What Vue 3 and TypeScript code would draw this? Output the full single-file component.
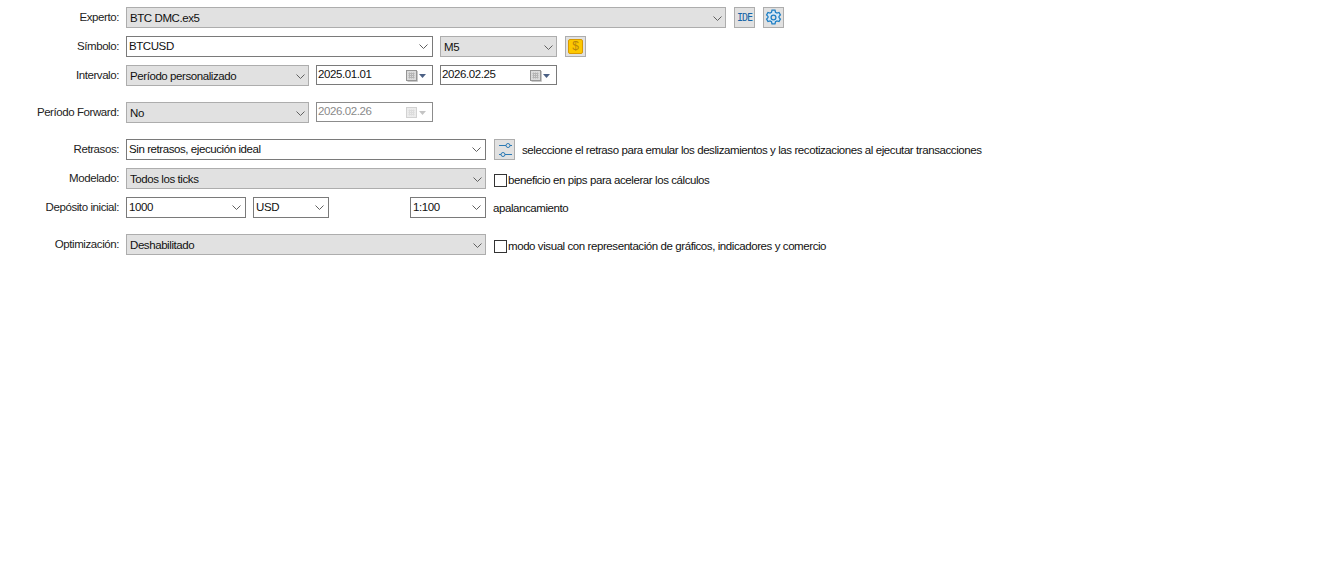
<script setup lang="ts">
const chevron = "M0.5 0.5 L4.5 4.5 L8.5 0.5";
</script>

<template>
  <div class="form">
    <div class="row">
      <label class="lbl">Experto:</label>
      <div class="sel gray w600"><span>BTC DMC.ex5</span><svg class="chev" viewBox="0 0 9 5"><path :d="chevron" /></svg></div>
      <button class="btn ml8 ide">IDE</button>
      <button class="btn ml8">
        <svg width="17" height="17" viewBox="0 0 17 17" fill="#d5e8f6" stroke="#1f7fc4" stroke-width="1.300">
          <path d="M7 1.200h3l.5 2 1.500.8 2-.6 1.400 2.600-1.400 1.400v1.200l1.400 1.400-1.400 2.600-2-.6-1.500.8-.5 2H7l-.5-2-1.500-.8-2 .6L1.600 10l1.400-1.400V7.400L1.600 6 3 3.400l2 .6 1.500-.8z" />
          <circle cx="8.500" cy="8.500" r="2.400" fill="#e1e1e1" />
        </svg>
      </button>
    </div>
    <div class="row">
      <label class="lbl">Símbolo:</label>
      <div class="sel white w307"><span>BTCUSD</span><svg class="chev" viewBox="0 0 9 5"><path :d="chevron" /></svg></div>
      <div class="sel gray w117 ml7"><span>M5</span><svg class="chev" viewBox="0 0 9 5"><path :d="chevron" /></svg></div>
      <button class="btn ml8"><span class="coin">$</span></button>
    </div>
    <div class="row">
      <label class="lbl">Intervalo:</label>
      <div class="sel gray w183"><span>Período personalizado</span><svg class="chev" viewBox="0 0 9 5"><path :d="chevron" /></svg></div>
      <div class="date ml7"><span>2025.01.01</span>
        <svg class="cal" width="20" height="13" viewBox="0 0 20 13">
          <rect x="0.5" y="0.5" width="10" height="10" fill="#dcdcdc" stroke="#959595" />
          <path d="M2.500 3.500h6M2.500 5.500h6M2.500 7.500h6M3.500 2.500v6M5.500 2.500v6M7.500 2.500v6" stroke="#b4b4b4" fill="none" />
          <path d="M11.500 1v10.500H1.500" stroke="#c8c8c8" fill="none" />
          <path d="M13 4h7l-3.500 4z" fill="#4c6185" />
        </svg>
      </div>
      <div class="date ml7"><span>2026.02.25</span>
        <svg class="cal" width="20" height="13" viewBox="0 0 20 13">
          <rect x="0.5" y="0.5" width="10" height="10" fill="#dcdcdc" stroke="#959595" />
          <path d="M2.500 3.500h6M2.500 5.500h6M2.500 7.500h6M3.500 2.500v6M5.500 2.500v6M7.500 2.500v6" stroke="#b4b4b4" fill="none" />
          <path d="M11.500 1v10.500H1.500" stroke="#c8c8c8" fill="none" />
          <path d="M13 4h7l-3.500 4z" fill="#4c6185" />
        </svg>
      </div>
    </div>
    <div class="row group">
      <label class="lbl">Período Forward:</label>
      <div class="sel gray w183"><span>No</span><svg class="chev" viewBox="0 0 9 5"><path :d="chevron" /></svg></div>
      <div class="date ml7 off"><span>2026.02.26</span>
        <svg class="cal" width="20" height="13" viewBox="0 0 20 13">
          <rect x="0.5" y="0.5" width="10" height="10" fill="#ececec" stroke="#d2d2d2" />
          <path d="M2.500 3.500h6M2.500 5.500h6M2.500 7.500h6M3.500 2.500v6M5.500 2.500v6M7.500 2.500v6" stroke="#dcdcdc" fill="none" />
          <path d="M13 4h7l-3.500 4z" fill="#c4c4c4" />
        </svg>
      </div>
    </div>
    <div class="row group">
      <label class="lbl">Retrasos:</label>
      <div class="sel white w360"><span>Sin retrasos, ejecución ideal</span><svg class="chev" viewBox="0 0 9 5"><path :d="chevron" /></svg></div>
      <button class="btn ml8">
        <svg width="17" height="15" viewBox="0 0 17 15" fill="none" stroke="#2b7ab5">
          <path d="M3 3.500h13M3 12.500h13" />
          <circle cx="12" cy="3.500" r="2" fill="#e1e1e1" />
          <circle cx="7" cy="12.500" r="2" fill="#e1e1e1" />
        </svg>
      </button>
      <span class="note ml7">seleccione el retraso para emular los deslizamientos y las recotizaciones al ejecutar transacciones</span>
    </div>
    <div class="row">
      <label class="lbl">Modelado:</label>
      <div class="sel gray w360"><span>Todos los ticks</span><svg class="chev" viewBox="0 0 9 5"><path :d="chevron" /></svg></div>
      <span class="check ml8"></span>
      <span class="note low ml1">beneficio en pips para acelerar los cálculos</span>
    </div>
    <div class="row">
      <label class="lbl">Depósito inicial:</label>
      <div class="sel white w120"><span>1000</span><svg class="chev" viewBox="0 0 9 5"><path :d="chevron" /></svg></div>
      <div class="sel white w76 ml7"><span>USD</span><svg class="chev" viewBox="0 0 9 5"><path :d="chevron" /></svg></div>
      <div class="sel white w76 ml81"><span>1:100</span><svg class="chev" viewBox="0 0 9 5"><path :d="chevron" /></svg></div>
      <span class="note ml7">apalancamiento</span>
    </div>
    <div class="row group">
      <label class="lbl">Optimización:</label>
      <div class="sel gray w360"><span>Deshabilitado</span><svg class="chev" viewBox="0 0 9 5"><path :d="chevron" /></svg></div>
      <span class="check ml8"></span>
      <span class="note low ml1">modo visual con representación de gráficos, indicadores y comercio</span>
    </div>
  </div>
</template>

<style scoped>
.form {
  display: flex;
  flex-direction: column;
  gap: 8px;
  padding-top: 7px;
  font-family: "Liberation Sans", Arial, sans-serif;
  font-size: 11.5px;
  letter-spacing: -0.42px;
  color: #111;
}
.row {
  display: flex;
  align-items: flex-start;
  height: 21px;
}
.row.group {
  margin-top: 8px;
}
.lbl {
  width: 119px;
  margin-right: 7px;
  flex: none;
  text-align: right;
  line-height: 21px;
  color: #222;
}
.sel {
  box-sizing: border-box;
  height: 21px;
  flex: none;
  display: flex;
  align-items: center;
  justify-content: space-between;
  border: 1px solid #adadad;
  line-height: 17px;
}
.sel.gray {
  background: #e1e1e1;
  padding: 1px 3px 0 3px;
}
.sel.white {
  background: #fff;
  border-color: #7a7a7a;
  padding: 0 4px 1px 2px;
}
.chev {
  width: 9px;
  height: 5px;
  flex: none;
  fill: none;
  stroke: #606060;
  stroke-width: 1;
}
.white .chev {
  margin-top: 1px;
}
.w600 { width: 600px; }
.w360 { width: 360px; }
.w307 { width: 307px; }
.w183 { width: 183px; }
.w120 { width: 120px; }
.w117 { width: 117px; }
.w76 { width: 76px; }
.ml1 { margin-left: 1px; }
.ml7 { margin-left: 7px; }
.ml8 { margin-left: 8px; }
.ml81 { margin-left: 81px; }
.date {
  box-sizing: border-box;
  width: 117px;
  height: 20px;
  flex: none;
  display: flex;
  align-items: center;
  justify-content: space-between;
  border: 1px solid #7a7a7a;
  padding: 0 6px 2px 1px;
  background: #fff;
}
.date.off {
  border-color: #8c8c8c;
  color: #8a8a8a;
}
.cal {
  flex: none;
  margin-top: 4px;
}
.btn {
  box-sizing: border-box;
  width: 21px;
  height: 21px;
  flex: none;
  padding: 0;
  display: flex;
  align-items: center;
  justify-content: center;
  background: #e1e1e1;
  border: 1px solid #adadad;
  font-family: inherit;
}
.ide {
  font-family: "DejaVu Sans Mono", monospace;
  font-size: 10px;
  letter-spacing: -1px;
  color: #1565a8;
}
.coin {
  box-sizing: border-box;
  width: 15px;
  height: 15px;
  display: block;
  background: #fdc800;
  border: 1px solid #d99a00;
  border-radius: 2px;
  color: #b8860b;
  font-size: 12px;
  letter-spacing: 0;
  line-height: 13px;
  text-align: center;
}
.note {
  flex: none;
  line-height: 23px;
  color: #111;
}
.note.low {
  line-height: 25px;
}
.check {
  box-sizing: border-box;
  width: 13px;
  height: 13px;
  flex: none;
  margin-top: 6px;
  background: #fff;
  border: 1px solid #333;
}
</style>
